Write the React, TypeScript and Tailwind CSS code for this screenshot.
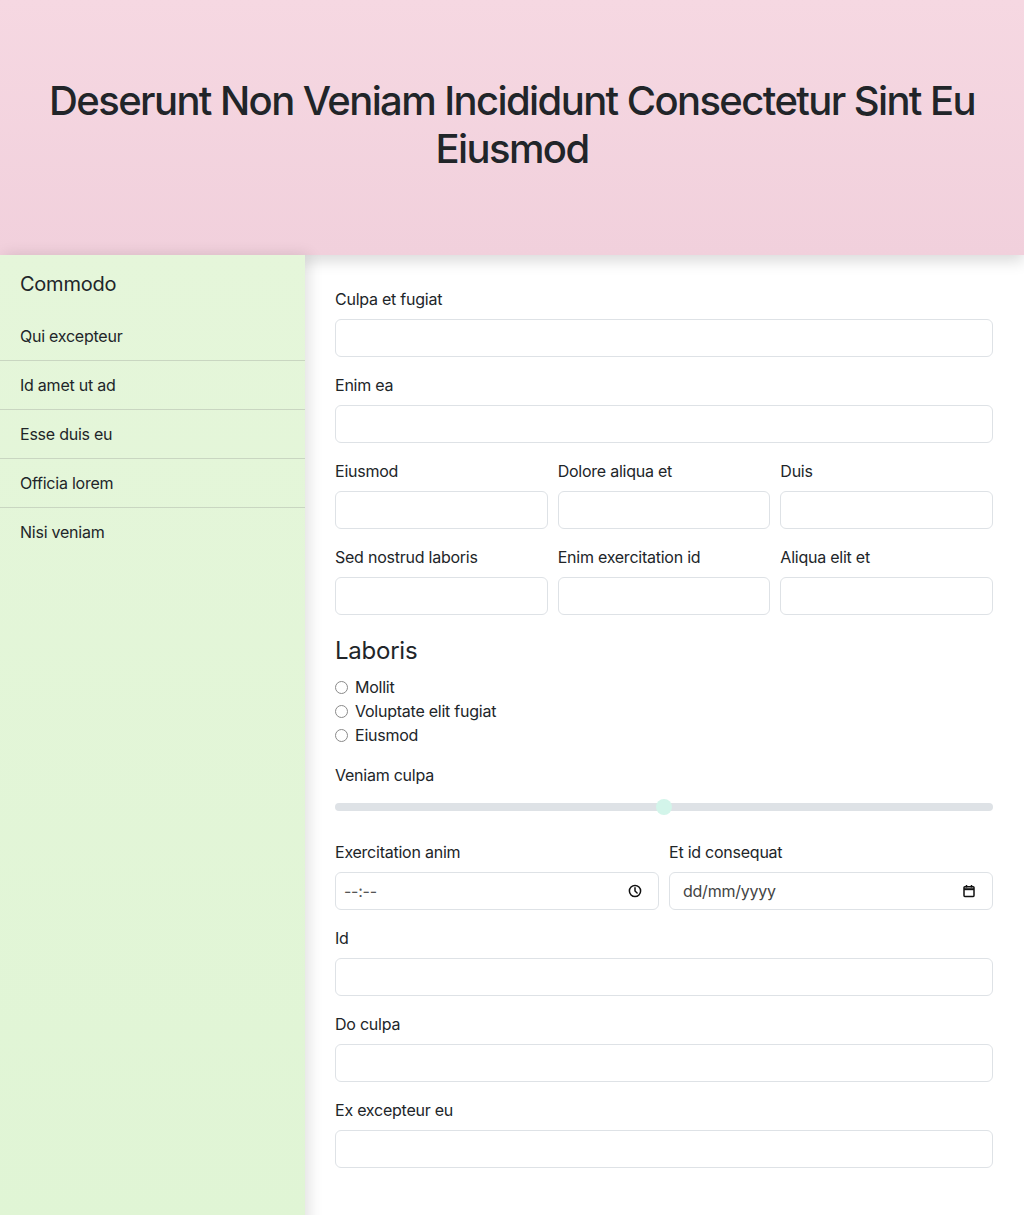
const font = { fontFamily: 'Inter, "Liberation Sans", sans-serif' };

const navItems = ['Qui excepteur', 'Id amet ut ad', 'Esse duis eu', 'Officia lorem', 'Nisi veniam'];
const radios = ['Mollit', 'Voluptate elit fugiat', 'Eiusmod'];

function Field({ label }: { label: string }) {
  return (
    <div className="mb-4">
      <label className="block mb-2 text-base leading-6 text-[#212529]">{label}</label>
      <input
        type="text"
        className="block w-full h-[38px] rounded-md border border-[#dee2e6] bg-white px-3 outline-none"
      />
    </div>
  );
}

function ClockIcon() {
  return (
    <svg width="14" height="14" viewBox="0 0 14 14" fill="none" stroke="#111" strokeWidth="1.5">
      <circle cx="7" cy="7" r="5.6" />
      <path d="M7 3.8V7l2.1 2" strokeLinecap="round" />
    </svg>
  );
}

function CalendarIcon() {
  return (
    <svg width="14" height="14" viewBox="0 0 14 14" fill="none" stroke="#111" strokeWidth="1.5">
      <rect x="2" y="2.8" width="10" height="9.6" rx="0.8" />
      <path d="M2 5.2h10" strokeWidth="2" />
      <path d="M4.5 1v2.4M9.5 1v2.4" />
    </svg>
  );
}

export default function App() {
  return (
    <div className="min-h-[1215px] flex flex-col bg-white text-[#212529] tracking-[-0.015em]" style={font}>
      {/* Header */}
      <header className="relative z-10 h-[255px] flex items-center justify-center px-10 pb-[6px] bg-gradient-to-b from-[#f6d8e2] to-[#f1d0dc] shadow-[0_6px_14px_rgba(0,0,0,0.15)]">
        <h1 className="text-[40px] leading-[48px] font-medium text-center tracking-[-0.04em] text-[#212529]">
          Deserunt Non Veniam Incididunt Consectetur Sint Eu Eiusmod
        </h1>
      </header>

      <div className="flex flex-1">
        {/* Sidebar */}
        <aside className="relative z-20 w-[305px] shrink-0 pt-[17px] bg-gradient-to-b from-[#e5f6da] to-[#e0f5d5] shadow-[4px_0_14px_rgba(0,0,0,0.12)]">
          <h5 className="px-5 mb-4 text-xl leading-6">Commodo</h5>
          <ul>
            {navItems.map((item, i) => (
              <li
                key={item}
                className={`px-5 py-3 text-base leading-6 ${i < navItems.length - 1 ? 'border-b border-[#c9d6c1]' : ''}`}
              >
                {item}
              </li>
            ))}
          </ul>
        </aside>

        {/* Main form */}
        <main className="flex-1 bg-white pt-8 pl-[30px] pr-[31px] pb-12">
          <Field label="Culpa et fugiat" />
          <Field label="Enim ea" />

          <div className="grid grid-cols-3 gap-x-[10px]">
            <Field label="Eiusmod" />
            <Field label="Dolore aliqua et" />
            <Field label="Duis" />
            <Field label="Sed nostrud laboris" />
            <Field label="Enim exercitation id" />
            <Field label="Aliqua elit et" />
          </div>

          <h4 className="mt-[5px] mb-[10px] text-2xl leading-[29px]">Laboris</h4>
          <div className="mb-4">
            {radios.map((r) => (
              <label key={r} className="flex items-center h-6 text-base">
                <span className="w-[13px] h-[13px] rounded-full border border-[#8a8a8a] bg-white mr-[7px]" />
                {r}
              </label>
            ))}
          </div>

          <label className="block mb-2 text-base leading-6">Veniam culpa</label>
          <div className="relative h-6 mb-[21px] flex items-center">
            <div className="w-full h-2 rounded-full bg-[#dee2e6]" />
            <div className="absolute left-1/2 -translate-x-1/2 w-4 h-4 rounded-full bg-[#d3f5ea]" />
          </div>

          <div className="grid grid-cols-2 gap-x-[10px]">
            <div className="mb-4">
              <label className="block mb-2 text-base leading-6">Exercitation anim</label>
              <div className="flex items-center justify-between h-[38px] rounded-md border border-[#dee2e6] pl-2 pr-4">
                <span className="text-base text-[#555]">--:--</span>
                <ClockIcon />
              </div>
            </div>
            <div className="mb-4">
              <label className="block mb-2 text-base leading-6">Et id consequat</label>
              <div className="flex items-center justify-between h-[38px] rounded-md border border-[#dee2e6] pl-[13px] pr-4">
                <span className="text-base text-[#444]">dd/mm/yyyy</span>
                <CalendarIcon />
              </div>
            </div>
          </div>

          <Field label="Id" />
          <Field label="Do culpa" />
          <Field label="Ex excepteur eu" />
        </main>
      </div>
    </div>
  );
}
